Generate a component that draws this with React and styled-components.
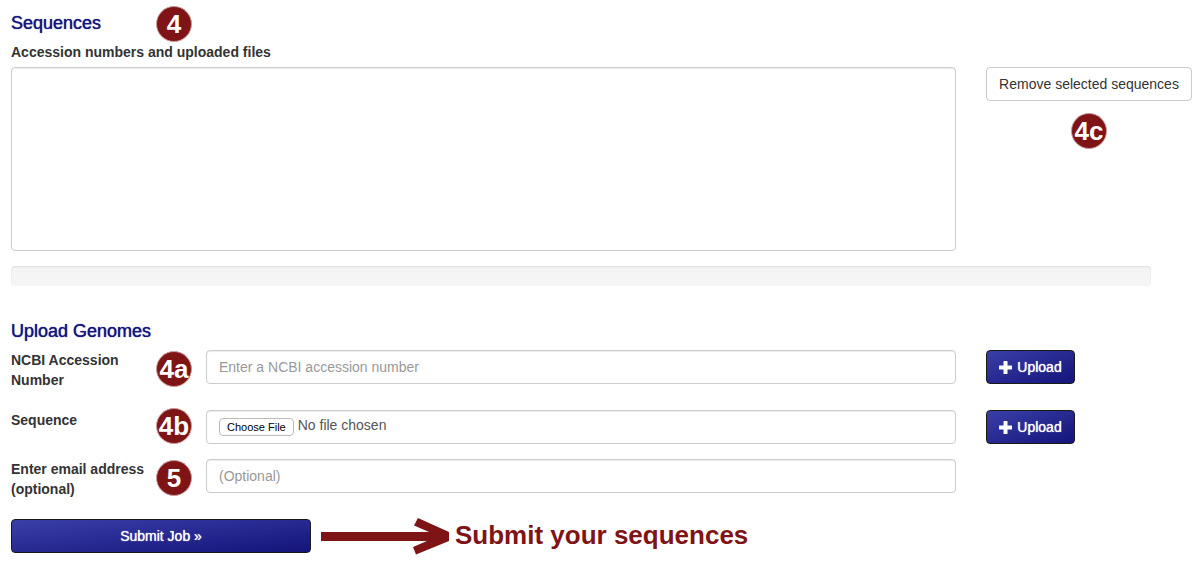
import React from "react";
import styled, { createGlobalStyle, css } from "styled-components";

const maroon = "#7f1416";

const GlobalStyle = createGlobalStyle`
  *, *::before, *::after { box-sizing: border-box; }
  body {
    margin: 0;
    background: #fff;
    color: #333;
    font: 14px/20px "Liberation Sans", Arial, sans-serif;
  }
  button, input, select { font: inherit; }
`;

const Page = styled.form`
  padding: 6px 12px 14px 11px;
`;

const SectionHeader = styled.header`
  display: grid;
  grid-template-columns: 145px 36px;
  height: 36px;
`;

const Title = styled.h2`
  margin: 0;
  color: #14147a;
  font-size: 18px;
  font-weight: 500;
  line-height: 22px;
  text-shadow: 0 0 1px #14147a;
  white-space: nowrap;
  padding-top: ${(p) => (p.$inset ? "6px" : "0")};
`;

const Badge = styled.span`
  display: flex;
  align-items: center;
  justify-content: center;
  width: 36px;
  height: 36px;
  border: 1px solid #c99a9a;
  border-radius: 50%;
  background: ${maroon};
  color: #fff;
  font-size: 26px;
  font-weight: 700;
  line-height: 34px;
`;

const Label = styled.label`
  display: block;
  font-weight: 700;
`;

const SequenceArea = styled.div`
  display: grid;
  grid-template-columns: minmax(0, 1fr) 206px;
  gap: 30px;
  margin-top: 5px;
`;

const SideColumn = styled.div`
  display: flex;
  flex-direction: column;
  align-items: center;
  gap: 12px;
`;

const control = css`
  display: block;
  width: 100%;
  margin: 0;
  border: 1px solid #ccc;
  border-radius: 4px;
  background: #fff;
  box-shadow: inset 0 1px 1px rgba(0, 0, 0, 0.075);
  color: #555;
  outline-color: #66afe9;
`;

const SequenceList = styled.select`
  ${control}
  height: 184px;
  padding: 6px 12px;
`;

const TextInput = styled.input`
  ${control}
  height: 34px;
  padding: 6px 12px;
  &::placeholder { color: #999; opacity: 1; }
`;

const FileInput = styled.input`
  ${control}
  height: 34px;
  padding: 4px 12px;
  line-height: 20px;
  &::file-selector-button {
    height: 18px;
    margin: 3px 4px 0 0;
    padding: 0 7px;
    border: 1px solid #bbb;
    border-radius: 4px;
    background: #fff;
    color: #000;
    font: 11px/16px "Liberation Sans", Arial, sans-serif;
    vertical-align: top;
  }
`;

const Progress = styled.div`
  height: 20px;
  margin: 15px 41px 34px 0;
  border-radius: 4px;
  background: #f5f5f5;
  box-shadow: inset 0 1px 2px rgba(0, 0, 0, 0.1);
`;

const Row = styled.div`
  display: grid;
  grid-template-columns: 145px 36px minmax(0, 1fr) 206px;
  align-items: start;
  margin-top: ${(p) => p.$gap}px;
`;

const RowBadge = styled(Badge)`
  align-self: center;
  margin: -2px 0 0;
`;

const Field = styled.div`
  padding: 0 30px 0 14px;
`;

const Button = styled.button`
  height: 34px;
  padding: 6px 12px;
  border: 1px solid #ccc;
  border-radius: 4px;
  background: #fff;
  color: #333;
  line-height: 20px;
  white-space: nowrap;
  cursor: pointer;
`;

const RemoveButton = styled(Button)`
  width: 100%;
`;

const PrimaryButton = styled(Button)`
  display: inline-flex;
  align-items: center;
  justify-content: center;
  gap: 5px;
  border-color: #1a1a1a;
  background: linear-gradient(to bottom right, #3a3fa8, #14147a);
  color: #fff;
  width: ${(p) => (p.$wide ? "300px" : "89px")};
  text-shadow: 0 0 1px #fff;
`;

const SubmitRow = styled.div`
  display: flex;
  align-items: center;
  height: 34px;
  margin-top: 20px;
`;

const Arrow = styled.svg`
  flex: none;
  width: 130px;
  height: 38px;
  margin: 0 5px 0 9px;
`;

const Callout = styled.span`
  color: ${maroon};
  font-size: 26px;
  font-weight: 700;
  line-height: 30px;
  padding-bottom: 2px;
`;

const UploadButton = ({ label }) => (
  <PrimaryButton type="button" aria-label={label}>
    <svg width="13" height="13" viewBox="0 0 13 13" aria-hidden="true">
      <path d="M5 0h3q.5 0 .5.5v4h4q.5 0 .5.5v3q0 .5-.5.5h-4v4q0 .5-.5.5H5q-.5 0-.5-.5v-4h-4Q0 8.500 0 8V5q0-.5.5-.5h4v-4Q4.500 0 5 0z" fill="#fff" />
    </svg>
    Upload
  </PrimaryButton>
);

export default function App() {
  return (
    <>
      <GlobalStyle />
      <Page onSubmit={(e) => e.preventDefault()}>
        <section>
          <SectionHeader>
            <Title $inset>Sequences</Title>
            <Badge>4</Badge>
          </SectionHeader>
          <Label htmlFor="sequences">Accession numbers and uploaded files</Label>
          <SequenceArea>
            <SequenceList id="sequences" multiple />
            <SideColumn>
              <RemoveButton type="button">Remove selected sequences</RemoveButton>
              <Badge>4c</Badge>
            </SideColumn>
          </SequenceArea>
          <Progress role="progressbar" aria-label="Upload progress" />
        </section>

        <section>
          <Title>Upload Genomes</Title>
          <Row $gap={8}>
            <Label htmlFor="accession">NCBI Accession Number</Label>
            <RowBadge>4a</RowBadge>
            <Field>
              <TextInput id="accession" type="text" placeholder="Enter a NCBI accession number" />
            </Field>
            <div><UploadButton label="Upload accession number" /></div>
          </Row>
          <Row $gap={20}>
            <Label htmlFor="file">Sequence</Label>
            <RowBadge>4b</RowBadge>
            <Field>
              <FileInput id="file" type="file" />
            </Field>
            <div><UploadButton label="Upload sequence file" /></div>
          </Row>
          <Row $gap={15}>
            <Label htmlFor="email">Enter email address (optional)</Label>
            <RowBadge>5</RowBadge>
            <Field>
              <TextInput id="email" type="email" placeholder="(Optional)" />
            </Field>
          </Row>
          <SubmitRow>
            <PrimaryButton type="submit" $wide>Submit Job »</PrimaryButton>
            <Arrow viewBox="0 0 130 38" aria-hidden="true">
              <path
                d="M1 15H109L94 8.500L98 1L129 15V24L96 37.500L93 30L107 24H1Z"
                fill={maroon}
              />
            </Arrow>
            <Callout>Submit your sequences</Callout>
          </SubmitRow>
        </section>
      </Page>
    </>
  );
}
